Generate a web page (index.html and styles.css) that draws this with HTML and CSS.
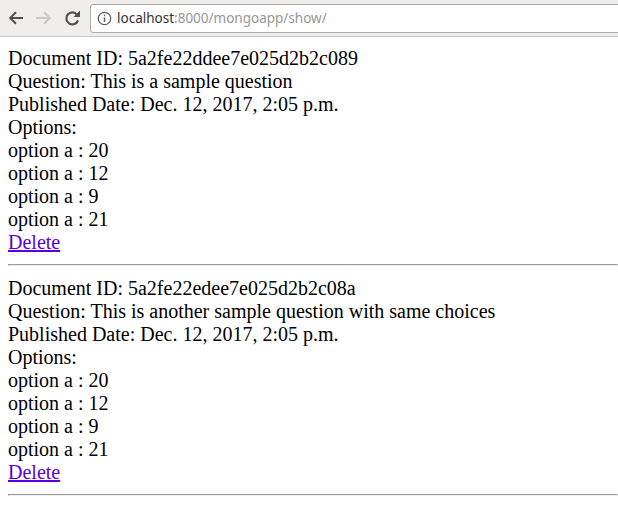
FILE: index.html
```html
<!DOCTYPE html>
<html lang="en">
<head>
  <meta charset="UTF-8">
  <title>localhost:8000/mongoapp/show/</title>
  <link rel="stylesheet" href="styles.css">
</head>
<body>
  <!-- Browser toolbar -->
  <div class="toolbar">
    <svg class="nav-icon" width="18" height="18" viewBox="0 0 18 18"><path d="M16 9H3.5M9 3.2L3.2 9 9 14.8" fill="none" stroke="#505050" stroke-width="2"/></svg>
    <svg class="nav-icon" width="18" height="18" viewBox="0 0 18 18"><path d="M1 9h13.5M9 3.2L14.8 9 9 14.8" fill="none" stroke="#c8c8c8" stroke-width="2"/></svg>
    <svg class="nav-icon" width="18" height="18" viewBox="0 0 18 18"><path d="M15 11.5A6 6 0 1 1 14 5.6" fill="none" stroke="#505050" stroke-width="2.2"/><path d="M10.5 8H17V1.5z" fill="#505050"/></svg>
    <div class="address">
      <svg width="15" height="15" viewBox="0 0 14 14"><circle cx="7" cy="7" r="5.8" fill="none" stroke="#606060" stroke-width="1.2"/><path d="M7 6v4.2M7 3.6v1.4" stroke="#606060" stroke-width="1.4"/></svg>
      <span class="host">localhost<span class="url-rest">:8000/mongoapp/show/</span></span>
    </div>
  </div>

  <div class="content">
    <div class="doc">
      Document ID: 5a2fe22ddee7e025d2b2c089<br>
      Question: This is a sample question<br>
      Published Date: Dec. 12, 2017, 2:05 p.m.<br>
      Options:<br>
      option a : 20<br>
      option a : 12<br>
      option a : 9<br>
      option a : 21<br>
      <a href="#">Delete</a>
    </div>
    <hr>
    <div class="doc">
      Document ID: 5a2fe22edee7e025d2b2c08a<br>
      Question: This is another sample question with same choices<br>
      Published Date: Dec. 12, 2017, 2:05 p.m.<br>
      Options:<br>
      option a : 20<br>
      option a : 12<br>
      option a : 9<br>
      option a : 21<br>
      <a href="#">Delete</a>
    </div>
    <hr>
  </div>
</body>
</html>
```

FILE: styles.css
```css
html, body {
  overflow: hidden;
}
body {
  margin: 0;
  height: 515px;
  background: #fff;
  font-family: "Liberation Serif", serif;
  font-size: 20px;
  line-height: 23px;
  color: #000;
}
.toolbar {
  display: flex;
  align-items: center;
  height: 36px;
  padding-left: 7px;
  background: #efeeec;
  border-bottom: 1px solid #c8c8c8;
}
.nav-icon {
  flex: none;
  margin-right: 10px;
}
.address {
  flex: 1;
  display: flex;
  align-items: center;
  gap: 5px;
  height: 27px;
  margin-left: -1px;
  margin-right: -4px;
  padding-left: 6px;
  background: #fff;
  border: 1px solid #aaa;
  border-radius: 3px;
}
.host {
  font-family: "Noto Sans", sans-serif;
  font-size: 13.5px;
  color: #333;
}
.url-rest {
  color: #979797;
}
.content {
  padding: 10px 0 0 8px;
}
hr {
  margin: 10px 0 11px;
}
a {
  color: #5a00e0;
  text-decoration-thickness: 2px;
}
```
